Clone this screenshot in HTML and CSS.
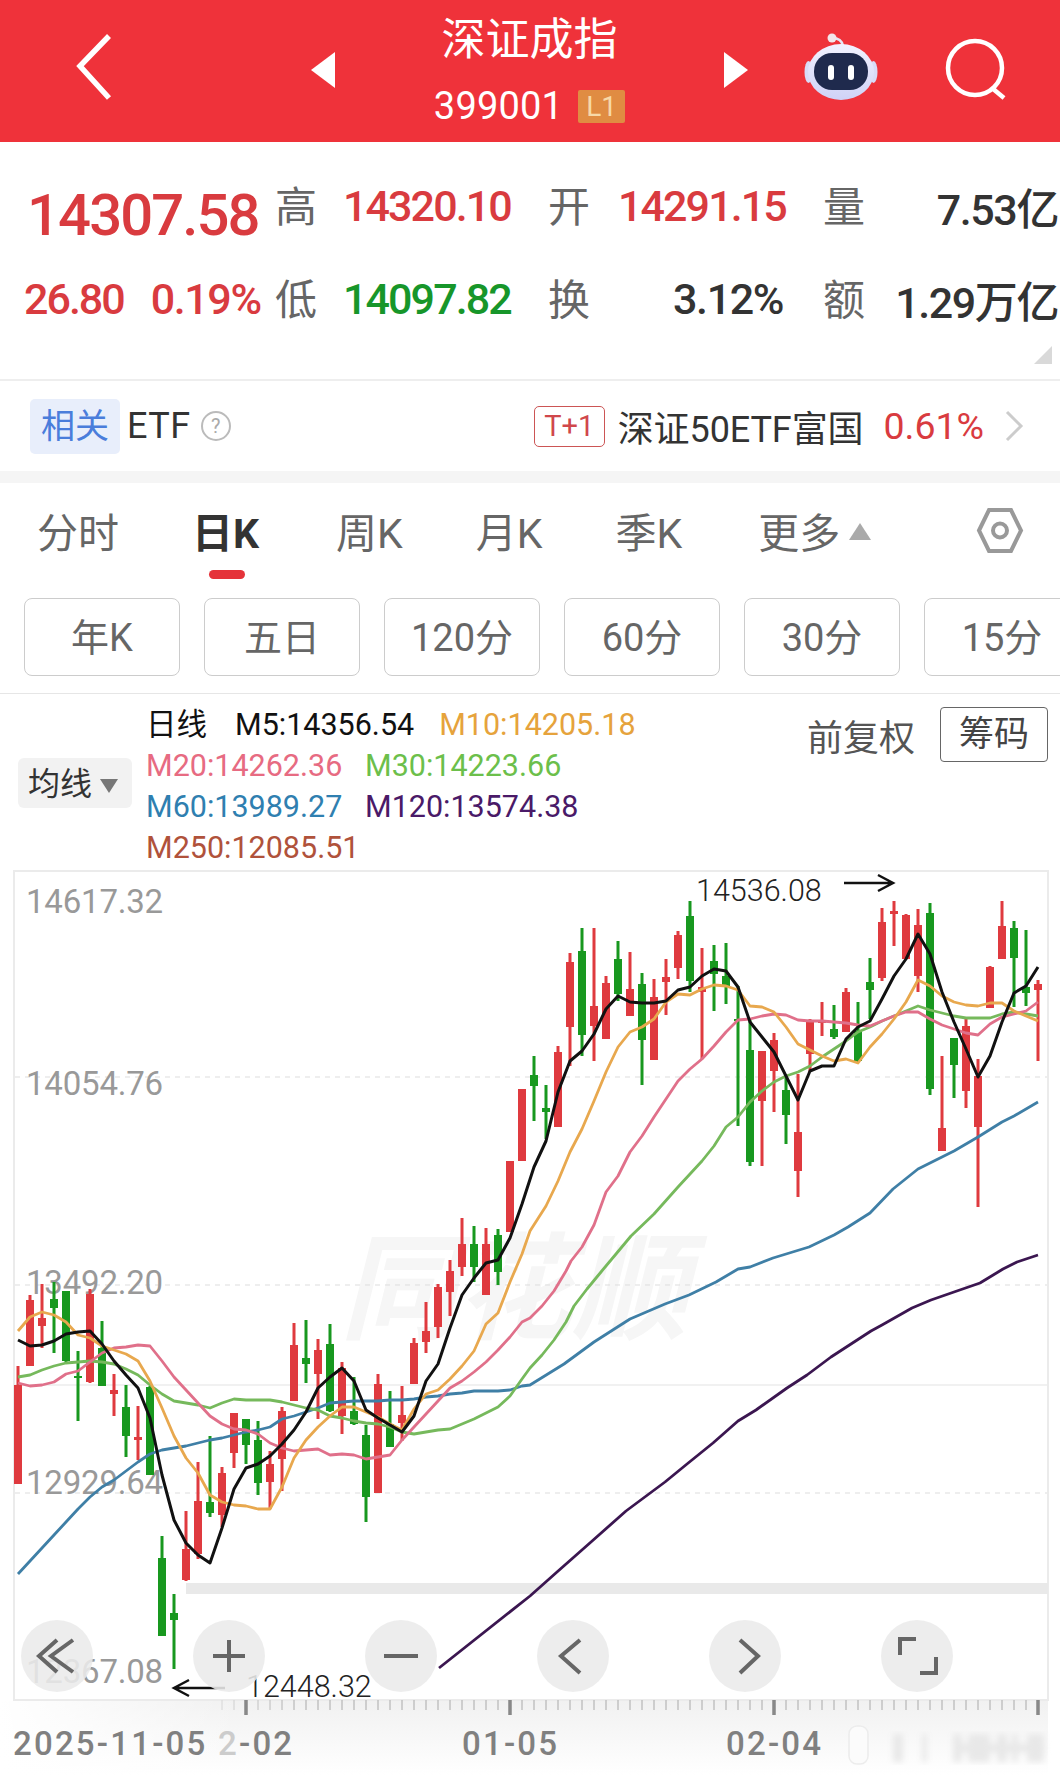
FILE: index.html
```html
<!DOCTYPE html>
<html lang="zh-CN">
<head>
  <meta charset="UTF-8" />
  <meta name="viewport" content="width=device-width, initial-scale=1.0" />
  <title>深证成指</title>
  <link rel="stylesheet" href="styles.css">
</head>
<body>
  <header class="topbar">
    <div class="topbar-left">
      <svg class="back" width="40" height="70" viewBox="0 0 40 70"><path d="M34 4L5 34L34 66" /></svg>
    </div>
    <div class="topbar-mid">
      <span class="tri-left"></span>
      <div class="title">
        <div class="name">深证成指</div>
        <div class="code">399001<span class="level">L1</span></div>
      </div>
      <span class="tri-right"></span>
    </div>
    <div class="topbar-right">
      <svg class="robot" width="76" height="72" viewBox="803 32 76 72">
        <defs>
          <linearGradient id="headFill" x1="0" y1="0" x2="0" y2="1">
            <stop offset="0" stop-color="#f2f2ff" />
            <stop offset="1" stop-color="#cfd2f6" />
          </linearGradient>
        </defs>
        <path d="M832 38C838 38 842 40 843 46" fill="none" stroke="#e6e6f4" stroke-width="2.5" />
        <circle cx="832" cy="38" r="4.5" fill="#f3e6ea" />
        <ellipse cx="808.5" cy="72" rx="4" ry="11" fill="#d9dbf7" />
        <ellipse cx="873.500" cy="72" rx="4" ry="11" fill="#d9dbf7" />
        <ellipse cx="841" cy="72" rx="33" ry="28" fill="url(#headFill)" />
        <rect x="814" y="53" width="54" height="37" rx="18" fill="#1f2a4d" />
        <rect x="828" y="65" width="6" height="15" rx="3" fill="#fff" />
        <rect x="848" y="65" width="6" height="15" rx="3" fill="#fff" />
      </svg>
      <svg class="search" width="62" height="64" viewBox="945 38 62 64"><circle cx="975" cy="68" r="27" /><path d="M992 88L1004 98" /></svg>
    </div>
  </header>

  <section class="stats">
    <div class="big red">14307.58</div>
    <div class="lab">高</div>
    <div class="val red">14320.10</div>
    <div class="lab pad">开</div>
    <div class="val red">14291.15</div>
    <div class="lab pad">量</div>
    <div class="val dark">7.53亿</div>

    <div class="chg red"><span>26.80</span><span class="pct">0.19%</span></div>
    <div class="lab">低</div>
    <div class="val green">14097.82</div>
    <div class="lab pad">换</div>
    <div class="val dark">3.12%</div>
    <div class="lab pad">额</div>
    <div class="val dark">1.29万亿</div>
    <span class="corner"></span>
  </section>

  <section class="etf">
    <span class="etf-tag">相关</span>
    <span class="etf-name">ETF</span>
    <span class="help">?</span>
    <span class="t1">T+1</span>
    <span class="fund">深证50ETF富国</span>
    <span class="fund-pct">0.61%</span>
    <svg class="more" width="20" height="32" viewBox="0 0 20 32"><path d="M3 2L17 16L3 30" /></svg>
  </section>

  <div class="band"></div>

  <nav class="tabs">
    <span class="tab">分时</span>
    <span class="tab active">日K</span>
    <span class="tab">周K</span>
    <span class="tab">月K</span>
    <span class="tab">季K</span>
    <span class="tab">更多<i class="up"></i></span>
    <svg class="hex" width="50" height="48" viewBox="975 507 50 48">
      <path d="M979 531.500L989 511H1011L1021 531.500L1011 552H989Z" />
      <circle cx="1000" cy="531.500" r="7" />
    </svg>
  </nav>

  <div class="periods">
    <span class="period">年K</span>
    <span class="period">五日</span>
    <span class="period">120分</span>
    <span class="period">60分</span>
    <span class="period">30分</span>
    <span class="period">15分</span>
  </div>

  <section class="legend">
    <div class="chip">均线<i class="down"></i></div>
    <div class="ma-list">
      <div class="ma-row first"><span class="c5">日线</span><span class="c5 m5">M5:14356.54</span><span class="c10">M10:14205.18</span></div>
      <div class="ma-row"><span class="ma c20">M20:14262.36</span><span class="ma c30">M30:14223.66</span></div>
      <div class="ma-row"><span class="ma c60">M60:13989.27</span><span class="ma c120">M120:13574.38</span></div>
      <div class="ma-row"><span class="ma c250">M250:12085.51</span></div>
    </div>
    <div class="legend-right">
      <span class="adjust">前复权</span>
      <span class="chips-btn">筹码</span>
    </div>
  </section>

  <section class="chart">
    <svg class="plot" width="1060" height="906" viewBox="0 870 1060 906">
      <defs>
        <linearGradient id="footFade" x1="0" y1="0" x2="0" y2="1">
          <stop offset="0" stop-color="#f1f1f1" />
          <stop offset="1" stop-color="#fff" />
        </linearGradient>
        <linearGradient id="footLeft" x1="0" y1="0" x2="1" y2="0">
          <stop offset="0" stop-color="#fff" />
          <stop offset="1" stop-color="#fff" stop-opacity="0" />
        </linearGradient>
        <linearGradient id="tickFade" gradientUnits="userSpaceOnUse" x1="210" y1="0" x2="300" y2="0">
          <stop offset="0" stop-color="#ddd" />
          <stop offset="1" stop-color="#aaa" />
        </linearGradient>
        <filter id="smear"><feGaussianBlur stdDeviation="3" /></filter>
      </defs>

      <!-- foot of the chart -->
      <rect x="0" y="1702" width="1048" height="74" fill="url(#footFade)" />
      <rect x="0" y="1702" width="240" height="74" fill="url(#footLeft)" />
      <g class="smear" filter="url(#smear)">
        <rect x="893" y="1735" width="10" height="28" />
        <rect x="922" y="1735" width="5" height="28" />
        <rect x="953" y="1735" width="9" height="28" />
        <rect x="968" y="1735" width="22" height="28" />
        <rect x="997" y="1735" width="10" height="28" />
        <rect x="1012" y="1735" width="6" height="28" />
        <rect x="1027" y="1735" width="17" height="28" />
        <rect x="953" y="1745" width="92" height="8" />
      </g>
      <rect class="pill" x="849" y="1727" width="19" height="38" rx="8" />

      <!-- frame, grid, watermark -->
      <rect class="wm-back" x="14" y="872" width="1034" height="828" />
      <text class="wm" x="340" y="1331">同花顺</text>
      <rect class="frame" x="14" y="872" width="1034" height="829" />
      <path class="grid" d="M15 1078H1047M15 1286H1047M15 1494H1047" />
      <path class="mid" d="M15 1386H1047" />
      <rect class="shade" x="186" y="1584" width="862" height="11" />

      <!-- axis labels -->
      <text class="axis" x="26" y="914">14617.32</text>
      <text class="axis" x="26" y="1096">14054.76</text>
      <text class="axis" x="26" y="1295">13492.20</text>
      <text class="axis" x="26" y="1495">12929.64</text>
      <text class="axis" x="26" y="1684">12367.08</text>

      <!-- candles -->
      <path class="wick red-c" d="M18 1367V1485M30 1296V1367M42 1285V1349M90 1290V1384M114 1375V1417M138 1407V1461M186 1512V1582M198 1463V1560M222 1468V1528M234 1414V1469M270 1452V1510M282 1408V1492M294 1324V1402M318 1340V1420M342 1363V1435M378 1375V1494M402 1387V1442M414 1339V1385M426 1303V1354M438 1285V1339M450 1261V1317M462 1219V1277M486 1229V1296M510 1162V1233M522 1090V1162M558 1047V1128M570 954V1067M594 929V1062M606 977V1040M630 953V1017M654 980V1061M666 960V1016M678 932V980M702 949V1060M762 1052V1167M774 1034V1113M798 1075V1198M810 1020V1073M822 1003V1037M846 989V1033M882 909V982M894 902V947M906 915V960M918 910V993M942 1057V1152M966 1020V1109M978 1060V1208M990 967V1009M1002 902V960M1038 981V1062" />
      <path class="body red-c" d="M18 1386V1485M30 1301V1367M42 1319V1327M90 1295V1383M114 1391V1395M138 1438V1441M186 1550V1581M198 1502V1555M222 1474V1516M234 1414V1454M270 1465V1483M282 1412V1460M294 1346V1402M318 1351V1375M342 1369V1417M378 1385V1494M402 1416V1424M414 1344V1385M426 1332V1343M438 1288V1328M450 1272V1293M462 1245V1268M486 1245V1296M510 1162V1233M522 1090V1162M558 1053V1128M570 963V1028M594 1007V1027M606 984V1040M630 990V1017M654 998V1061M666 978V983M678 936V969M702 988V993M762 1052V1102M774 1041V1072M798 1133V1172M810 1023V1055M822 1021V1024M846 993V1033M882 923V979M894 912V915M906 916V960M918 926V977M942 1129V1152M966 1027V1092M978 1077V1128M990 968V1009M1002 927V960M1038 985V991" />
      <path class="wick green-c" d="M54 1283V1354M66 1292V1363M78 1352V1422M102 1322V1387M126 1386V1458M150 1387V1476M162 1537V1637M174 1595V1670M210 1437V1518M246 1420V1465M258 1422V1496M306 1321V1384M330 1325V1413M354 1378V1426M366 1426V1523M390 1392V1448M474 1227V1283M498 1230V1286M534 1057V1122M546 1086V1140M582 929V1057M618 942V1002M642 974V1086M690 902V993M714 946V1012M726 944V1005M738 987V1127M750 1020V1167M786 1077V1145M834 1006V1040M858 1003V1063M870 959V1020M930 904V1096M954 1039V1099M1014 922V1008M1026 931V1007" />
      <path class="body green-c" d="M54 1300V1309M66 1292V1362M78 1377V1379M102 1349V1387M126 1408V1437M150 1388V1476M162 1559V1637M174 1614V1621M210 1503V1514M246 1420V1446M258 1441V1484M306 1359V1365M330 1345V1412M354 1412V1425M366 1436V1498M390 1425V1448M474 1245V1268M498 1236V1273M534 1076V1087M546 1109V1113M582 952V1036M618 960V995M642 985V1041M690 917V982M714 962V975M726 977V987M738 1020V1022M750 1051V1163M786 1091V1116M834 1030V1038M858 1032V1062M870 983V991M930 914V1090M954 1039V1066M1014 929V959M1026 988V994" />

      <!-- moving averages -->
      <polyline class="line c120-l" points="439,1669 530,1597 557,1573 591,1543 626,1512 665,1483 687,1465 713,1444 738,1422 756,1411 787,1389 807,1376 831,1358 871,1332 882,1326 912,1309 931,1301 954,1293 980,1284 1003,1270 1017,1263 1038,1256" />
      <polyline class="line c60-l" points="18,1575 30,1562 42,1549 54,1536 66,1523 78,1510 90,1498 102,1488 114,1481 126,1472 138,1463 150,1455 162,1451 174,1449 186,1447 198,1444 210,1441 222,1439 234,1436 246,1433 258,1431 270,1428 282,1420 294,1417 306,1413 318,1409 330,1404 342,1403 354,1402 366,1402 378,1402 390,1401 402,1401 414,1400 426,1398 438,1397 450,1395 462,1394 474,1392 486,1392 498,1392 510,1391 522,1387 530,1386 564,1365 594,1343 630,1320 665,1305 689,1296 716,1283 738,1270 750,1268 773,1259 809,1248 834,1236 848,1228 870,1214 893,1190 918,1170 942,1158 954,1152 978,1138 1002,1123 1014,1117 1038,1103" />
      <polyline class="line c30-l" points="18,1378 30,1376 42,1371 54,1367 66,1364 78,1363 90,1362 102,1363 114,1365 126,1370 138,1376 150,1386 162,1395 174,1402 186,1404 198,1406 210,1409 222,1404 234,1400 246,1401 258,1401 270,1401 282,1403 294,1406 306,1409 318,1411 330,1417 342,1419 354,1422 366,1424 378,1425 390,1428 402,1433 414,1435 426,1433 438,1431 450,1430 462,1425 474,1420 486,1414 498,1408 510,1397 522,1380 530,1369 542,1356 554,1341 566,1323 574,1307 587,1290 601,1273 616,1255 631,1237 654,1215 678,1188 702,1162 714,1147 726,1128 738,1118 750,1103 762,1092 774,1083 786,1077 798,1073 810,1067 822,1058 834,1050 846,1042 858,1033 870,1028 882,1022 894,1017 906,1012 918,1007 930,1011 942,1014 954,1017 966,1019 978,1019 990,1019 1002,1015 1014,1013 1026,1015 1038,1017" />
      <polyline class="line c20-l" points="18,1384 30,1387 42,1386 54,1383 66,1375 78,1372 90,1363 102,1354 114,1349 126,1348 138,1346 150,1347 162,1362 174,1378 186,1391 198,1404 210,1417 222,1425 234,1430 246,1431 258,1435 270,1444 282,1449 294,1452 306,1451 318,1450 330,1456 342,1455 354,1456 366,1460 378,1458 390,1456 402,1441 414,1428 426,1415 438,1402 450,1389 462,1382 474,1373 486,1363 498,1351 510,1338 522,1323 530,1319 542,1307 554,1292 566,1272 571,1262 582,1248 594,1226 606,1193 618,1177 630,1153 642,1137 654,1118 666,1100 678,1082 690,1070 702,1060 714,1047 726,1033 738,1021 750,1020 762,1017 774,1015 786,1016 798,1021 810,1022 822,1022 834,1023 846,1024 858,1026 870,1027 882,1022 894,1017 906,1013 918,1013 930,1020 942,1026 954,1030 966,1034 978,1036 990,1025 1002,1018 1014,1015 1026,1012 1038,1003" />
      <polyline class="line c10-l" points="18,1332 30,1318 42,1313 54,1316 66,1323 78,1336 90,1339 102,1347 114,1351 126,1355 138,1362 150,1382 162,1409 174,1437 186,1459 198,1474 210,1496 222,1503 234,1506 246,1507 258,1510 270,1510 282,1488 294,1459 306,1441 318,1428 330,1417 342,1408 354,1408 366,1413 378,1418 390,1425 402,1431 414,1410 426,1395 438,1391 450,1380 462,1367 474,1352 486,1325 498,1314 510,1283 522,1255 530,1232 546,1207 558,1182 570,1153 582,1130 594,1102 606,1073 618,1048 630,1033 642,1028 654,1020 666,1003 678,995 690,996 702,990 714,986 726,987 738,991 750,1007 762,1008 774,1013 786,1028 798,1045 810,1051 822,1057 834,1062 846,1060 858,1064 870,1048 882,1035 894,1020 906,1003 918,981 930,987 942,997 954,1003 966,1006 978,1007 990,1004 1002,1004 1014,1012 1026,1017 1038,1022" />
      <polyline class="line c5-l" points="18,1341 30,1347 42,1346 54,1342 66,1335 78,1333 90,1332 102,1345 114,1362 126,1376 138,1389 150,1419 162,1476 174,1521 186,1544 198,1556 210,1564 222,1529 234,1490 246,1469 258,1465 270,1457 282,1445 294,1431 306,1413 318,1389 330,1378 342,1369 354,1382 366,1411 378,1419 390,1426 402,1433 414,1417 426,1382 438,1365 450,1329 462,1296 474,1279 486,1264 498,1261 510,1239 522,1205 534,1168 546,1142 558,1093 570,1062 582,1052 594,1035 606,1010 618,997 630,1003 642,1004 654,1004 666,1002 678,991 690,988 702,977 714,970 726,972 738,988 750,1023 762,1038 774,1053 786,1077 798,1101 810,1072 822,1067 834,1067 846,1040 858,1028 870,1022 882,1000 894,977 906,960 918,935 930,955 942,993 954,1023 966,1050 978,1078 990,1057 1002,1023 1014,994 1026,987 1038,968" />

      <!-- extremes -->
      <text class="mark" x="696" y="902">14536.08</text>
      <path class="arrow" d="M844 884H892M878 876L893 884L878 892" />
      <text class="mark" x="246" y="1698">12448.32</text>
      <path class="arrow" d="M225 1689H175M189 1681L174 1689L189 1697" />

      <!-- time axis -->
      <line class="ticks" x1="221.500" y1="1706" x2="1038" y2="1706" />
      <path class="majors" d="M246 1701V1716M510 1701V1716M774 1701V1716M1038 1701V1716" />
      <text class="date" x="13" y="1756">2025-11-05</text>
      <text class="date" x="218" y="1756"><tspan class="date-fade">2</tspan>-02</text>
      <text class="date" x="462" y="1756">01-05</text>
      <text class="date" x="726" y="1756">02-04</text>
    </svg>

    <div class="tools">
      <span class="tool"><svg width="72" height="72" viewBox="0 0 72 72"><path d="M36 20L18 36L36 52M52 20L30 36L52 52" /></svg></span>
      <span class="tool"><svg width="72" height="72" viewBox="0 0 72 72"><path d="M36 20V52M20 36H52" /></svg></span>
      <span class="tool"><svg width="72" height="72" viewBox="0 0 72 72"><path d="M19 36H53" /></svg></span>
      <span class="tool"><svg width="72" height="72" viewBox="0 0 72 72"><path d="M43 20L24 36L43 53" /></svg></span>
      <span class="tool"><svg width="72" height="72" viewBox="0 0 72 72"><path d="M31 20L49 36L31 53" /></svg></span>
      <span class="tool"><svg width="72" height="72" viewBox="0 0 72 72"><path d="M19 35V19H35M55 37V53H39" /></svg></span>
    </div>
  </section>
</body>
</html>
```

FILE: styles.css
```css
* {
  box-sizing: border-box;
}
body {
  margin: 0;
  width: 1060px;
  background-color: #fff;
  font-family: Roboto, "Noto Sans CJK SC", sans-serif;
  color: #333;
}

/* top bar */
.topbar {
  display: flex;
  height: 142px;
  background-color: #ef323a;
  color: #fff;
}
.topbar-left {
  width: 311px;
  padding: 32px 0 0 75px;
}
.back path {
  fill: none;
  stroke: #fff;
  stroke-width: 5.5;
}
.topbar-mid {
  display: flex;
  align-items: center;
  justify-content: space-between;
  width: 437px;
  padding-bottom: 2px;
}
.tri-left {
  border-top: 18px solid transparent;
  border-bottom: 18px solid transparent;
  border-right: 24px solid #fff;
}
.tri-right {
  border-top: 18px solid transparent;
  border-bottom: 18px solid transparent;
  border-left: 24px solid #fff;
}
.title {
  align-self: flex-start;
  display: flex;
  flex-direction: column;
  align-items: center;
  width: 320px;
}
.name {
  font-size: 44px;
  line-height: 52px;
  margin-top: 14px;
}
.code {
  display: flex;
  align-items: center;
  gap: 15px;
  font-size: 38px;
  line-height: 40px;
  margin-top: 20px;
  letter-spacing: 0.2px;
}
.level {
  width: 47px;
  height: 33px;
  background-color: #e08c42;
  border-radius: 2px;
  color: #f7d9a8;
  font-size: 28px;
  line-height: 33px;
  text-align: center;
  letter-spacing: 0;
}
.topbar-right {
  display: flex;
  align-items: flex-start;
  padding-top: 32px;
}
.robot {
  margin-left: 55px;
}
.search {
  margin: 6px 0 0 66px;
}
.search circle,
.search path {
  fill: none;
  stroke: #fff;
  stroke-width: 4.5;
}

/* quote block */
.stats {
  position: relative;
  display: grid;
  grid-template-columns: 251px 66px 165px 110px 165px 110px 165px;
  grid-auto-rows: 93px;
  align-items: center;
  height: 239px;
  padding: 17px 0 0 26px;
  border-bottom: 2px solid #eee;
}
.big {
  font-size: 58px;
  font-weight: 500;
  letter-spacing: -1.9px;
  padding-left: 1px;
  margin-top: 18px;
}
.lab {
  font-size: 42px;
  color: #666;
  margin-left: -2px;
  padding-bottom: 4px;
}
.pad {
  margin-left: 0;
  padding-left: 40px;
}
.val {
  font-size: 43px;
  font-weight: 500;
  letter-spacing: -1.9px;
  text-align: right;
  white-space: nowrap;
}
.val.dark {
  letter-spacing: -1.4px;
}
.chg {
  display: flex;
  gap: 27px;
  margin-left: -2px;
  font-size: 43px;
  font-weight: 500;
  letter-spacing: -2px;
}
.pct {
  letter-spacing: -1.4px;
}
.red {
  color: #d93b3f;
}
.green {
  color: #17962a;
}
.dark {
  color: #333;
}
.corner {
  position: absolute;
  right: 8px;
  bottom: 15px;
  border-left: 18px solid transparent;
  border-bottom: 18px solid #d9d9d9;
}

/* related etf */
.etf {
  display: flex;
  align-items: center;
  height: 90px;
  padding-left: 30px;
}
.etf-tag {
  width: 90px;
  height: 55px;
  background-color: #e8eefb;
  border-radius: 5px;
  color: #4a7ddb;
  font-size: 34px;
  line-height: 55px;
  text-align: center;
}
.etf-name {
  margin-left: 7px;
  font-size: 36px;
  letter-spacing: 0.5px;
  color: #333;
}
.help {
  width: 30px;
  height: 30px;
  margin-left: 10px;
  border: 2px solid #bbb;
  border-radius: 50%;
  color: #aaa;
  font-size: 20px;
  line-height: 26px;
  text-align: center;
}
.t1 {
  width: 71px;
  height: 41px;
  margin-left: 303px;
  border: 1.5px solid #cc5555;
  border-radius: 5px;
  color: #d0474b;
  font-size: 29px;
  line-height: 38px;
  text-align: center;
}
.fund {
  margin-left: 13px;
  font-size: 36px;
  letter-spacing: -0.1px;
  color: #333;
  white-space: nowrap;
}
.fund-pct {
  margin-left: 20px;
  font-size: 37.500px;
  color: #d93b3f;
}
.more {
  margin-left: 20px;
}
.more path {
  fill: none;
  stroke: #ccc;
  stroke-width: 3;
}
.band {
  height: 12px;
  background-color: #f5f5f5;
}

/* period tabs */
.tabs {
  display: flex;
  gap: 73px;
  height: 115px;
  padding: 27px 35px 0 37px;
}
.tab {
  position: relative;
  font-size: 41px;
  line-height: 48px;
  color: #666;
  white-space: nowrap;
}
.tab:nth-child(2) {
  margin-right: 4px;
}
.tab:nth-child(6) {
  margin-left: 3px;
}
.tab.active {
  color: #333;
  font-weight: 700;
}
.tab.active::after {
  content: "";
  position: absolute;
  left: 17px;
  top: 60px;
  width: 36px;
  height: 9px;
  border-radius: 5px;
  background-color: #e5333a;
}
.up {
  display: inline-block;
  margin-left: 9px;
  vertical-align: 8px;
  border-left: 11px solid transparent;
  border-right: 11px solid transparent;
  border-bottom: 17px solid #aaa;
}
.hex {
  margin: -4px 0 0 auto;
}
.hex path,
.hex circle {
  fill: none;
  stroke: #999;
  stroke-width: 4;
}
.periods {
  display: flex;
  gap: 24px;
  padding: 0 0 17px 24px;
  border-bottom: 1px solid #e6e6e6;
  overflow: hidden;
}
.period {
  flex: none;
  width: 156px;
  height: 78px;
  border: 1.5px solid #ccc;
  border-radius: 8px;
  color: #666;
  font-size: 38px;
  line-height: 78px;
  text-align: center;
}

/* moving average legend */
.legend {
  display: flex;
  height: 175px;
}
.chip {
  flex: none;
  width: 114px;
  height: 50px;
  margin: 64px 0 0 18px;
  background-color: #f2f2f2;
  border-radius: 6px;
  color: #333;
  font-size: 32px;
  line-height: 52px;
  padding-left: 10px;
  white-space: nowrap;
}
.down {
  display: inline-block;
  margin-left: 8px;
  vertical-align: 2px;
  border-left: 9px solid transparent;
  border-right: 9px solid transparent;
  border-top: 14px solid #777;
}
.ma-list {
  margin: 10px 0 0 14px;
  font-size: 30.500px;
  line-height: 41px;
}
.ma-row {
  display: flex;
  white-space: nowrap;
}
.ma-row.first {
  gap: 25px;
}
.m5 {
  margin-left: 3px;
}
.ma {
  width: 219px;
}
.c5 { color: #111; }
.c10 { color: #e6a33c; }
.c20 { color: #e76b82; }
.c30 { color: #6cbf4b; }
.c60 { color: #2f7fb0; }
.c120 { color: #4a1a68; }
.c250 { color: #b0523b; }
.legend-right {
  display: flex;
  align-items: flex-start;
  margin: 13px 12px 0 auto;
}
.adjust {
  margin: 8px 25px 0 0;
  font-size: 36px;
  line-height: 48px;
  color: #555;
  white-space: nowrap;
}
.chips-btn {
  width: 108px;
  height: 55px;
  border: 1.5px solid #666;
  border-radius: 4px;
  color: #444;
  font-size: 35px;
  line-height: 54px;
  text-align: center;
}

/* chart */
.chart {
  position: relative;
  height: 906px;
  overflow: hidden;
}
.plot {
  display: block;
}
.frame {
  fill: none;
  stroke: #ebebeb;
  stroke-width: 2;
}
.wm-back {
  fill: #fff;
}
.wm {
  font-size: 116px;
  font-weight: 700;
  font-style: italic;
  fill: #f6f6f6;
}
.grid {
  fill: none;
  stroke: #ddd;
  stroke-width: 1;
  stroke-dasharray: 5 5;
}
.mid {
  stroke: #ececec;
  stroke-width: 1.5;
}
.shade {
  fill: #e9e9e9;
}
.axis {
  font-size: 33px;
  letter-spacing: -0.2px;
  fill: #999;
}
.wick {
  fill: none;
  stroke-width: 3;
}
.body {
  fill: none;
  stroke-width: 8;
}
.red-c { stroke: #df3a3f; }
.green-c { stroke: #18981f; }
.line {
  fill: none;
  stroke-width: 2.800;
  stroke-linejoin: round;
}
.c5-l { stroke: #111; stroke-width: 3; }
.c10-l { stroke: #e8a84e; }
.c20-l { stroke: #e0708a; }
.c30-l { stroke: #76b95c; }
.c60-l { stroke: #3f7fa6; }
.c120-l { stroke: #3b1650; }
.mark {
  font-size: 30.500px;
  font-weight: 300;
  fill: #222;
}
.arrow {
  fill: none;
  stroke: #111;
  stroke-width: 2.5;
}
.ticks {
  stroke: url(#tickFade);
  stroke-width: 10;
  stroke-dasharray: 1 11;
}
.majors {
  stroke: #888;
  stroke-width: 3.500;
}
.date {
  font-size: 33px;
  font-weight: 500;
  letter-spacing: 2.2px;
  fill: #808080;
}
.date-fade {
  fill: #ccc;
}
.smear rect {
  fill: #e8e8e8;
}
.pill {
  fill: #fbfbfb;
  stroke: #ececec;
  stroke-width: 1.5;
}
.tools {
  position: absolute;
  left: 21px;
  top: 751px;
  display: flex;
  gap: 100px;
}
.tool {
  width: 72px;
  height: 72px;
  border-radius: 50%;
  background-color: rgba(235, 235, 235, 0.88);
}
.tool svg {
  display: block;
}
.tool path {
  fill: none;
  stroke: #666;
  stroke-width: 4;
}
```
